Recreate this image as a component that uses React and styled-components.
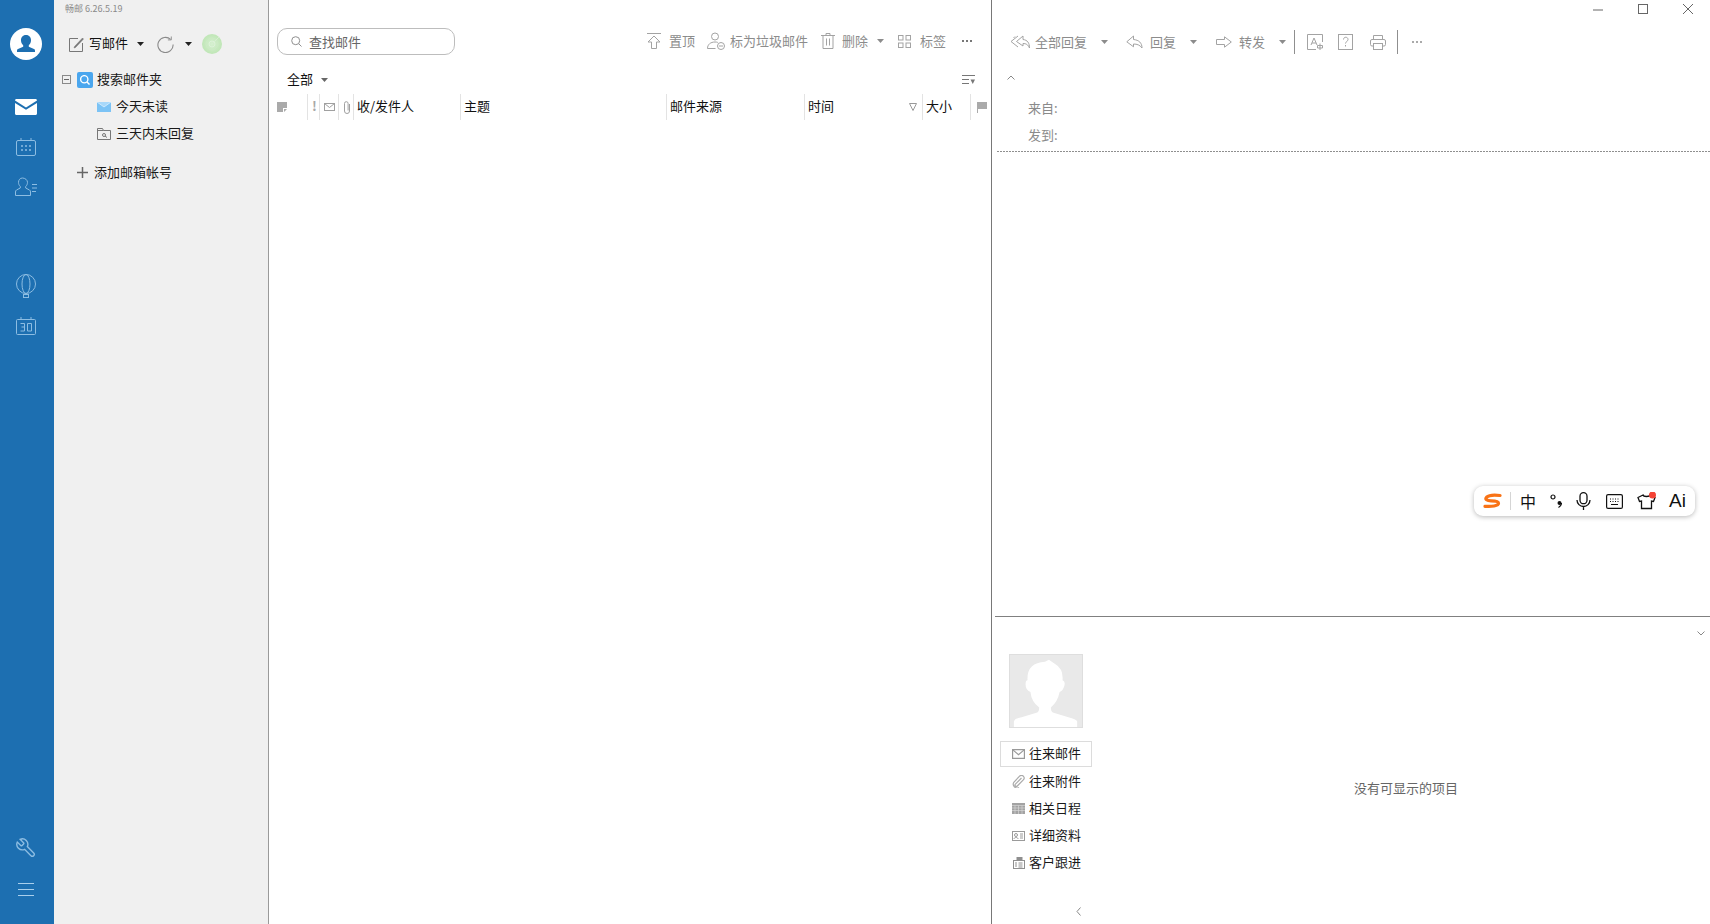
import React from "react"
import styled, { createGlobalStyle } from "styled-components"

const Global = createGlobalStyle`
  html, body { margin: 0; padding: 0; background: #fff; overflow: hidden; }
  * { box-sizing: border-box; }
  body { font-family: "Noto Sans CJK SC", "Noto Sans", sans-serif; font-size: 13px; color: #111; }
`

const Page = styled.div`
  position: relative;
  display: flex;
  width: 1710px;
  height: 924px;
  overflow: hidden;
`

/* left rail */
const Rail = styled.nav`
  width: 54px;
  flex: none;
  background: #1d6fb1;
  display: flex;
  flex-direction: column;
  align-items: center;
  padding: 28px 2px 15px 0;
`
const RailSlot = styled.div`
  width: 52px;
  height: 40px;
  flex: none;
  display: flex;
  align-items: center;
  justify-content: center;
  margin-top: ${p => p.$top || 0}px;
`
const RailSpacer = styled.div`
  flex: 1;
`

/* folder sidebar */
const Sidebar = styled.aside`
  width: 215px;
  flex: none;
  background: #f0f0f0;
  border-right: 1px solid #9a9a9a;
`
const Version = styled.div`
  height: 22px;
  padding: 1px 0 0 11px;
  font-size: 9px;
  line-height: 15px;
  color: #8a8a8a;
`
const ComposeBar = styled.div`
  height: 44px;
  display: flex;
  align-items: center;
  padding-left: 15px;
`
const ComposeLabel = styled.span`
  margin-left: 5px;
  line-height: 18px;
  padding-bottom: 2px;
`
const TreeRow = styled.div`
  height: 27px;
  display: flex;
  align-items: center;
  padding-left: ${p => p.$indent}px;
  gap: ${p => p.$gap}px;
  margin-top: ${p => p.$top || 0}px;
  color: #1a1a1a;
`
const TreeLabel = styled.span`
  line-height: 18px;
  padding-bottom: 2px;
  margin-left: ${p => p.$left || 0}px;
`
const ExpandBox = styled.span`
  width: 9px;
  height: 9px;
  border: 1px solid #8a8a8a;
  display: flex;
  align-items: center;
  justify-content: center;
  &::before {
    content: "";
    width: 5px;
    height: 1px;
    background: #666;
  }
`
const SearchBadge = styled.span`
  width: 16px;
  height: 16px;
  border-radius: 2px;
  background: #4aa6ee;
  display: flex;
  align-items: center;
  justify-content: center;
`

/* message list */
const ListPane = styled.section`
  width: 722px;
  flex: none;
  display: flex;
  flex-direction: column;
`
const ListToolbar = styled.div`
  height: 66px;
  padding: 16px 19px 0 8px;
  display: flex;
  align-items: center;
`
const SearchBox = styled.div`
  width: 178px;
  height: 27px;
  border: 1px solid #bdbdbd;
  border-radius: 10px;
  display: flex;
  align-items: center;
  padding-left: 13px;
  gap: 7px;
  color: #666;
  margin-right: auto;
`
const Action = styled.div`
  display: flex;
  align-items: center;
  gap: ${p => p.$gap}px;
  margin-left: ${p => p.$left || 0}px;
  color: #8c8c8c;
  line-height: 18px;
  white-space: nowrap;
`
const FilterRow = styled.div`
  height: 27px;
  margin-bottom: 1px;
  display: flex;
  align-items: center;
  padding: 0 16px 0 18px;
  justify-content: space-between;
`
const FilterLabel = styled.div`
  display: flex;
  align-items: center;
  gap: 8px;
  line-height: 18px;
`
const FilterText = styled.span`
  padding-bottom: 1px;
`
const ColumnHeader = styled.div`
  height: 26px;
  display: grid;
  grid-template-columns: 38px 12px 19px 15px 107px 206px 138px 118px 48px 21px;
`
const Column = styled.div`
  display: flex;
  align-items: center;
  padding-left: ${p => p.$pad ?? 3}px;
  border-left: ${p => (p.$first ? "none" : "1px solid #e3e3e3")};
  justify-content: ${p => (p.$spread ? "space-between" : "flex-start")};
  padding-right: ${p => (p.$spread ? 5 : 0)}px;
  white-space: nowrap;
`
const HeadLabel = styled.span`
  line-height: 18px;
  padding-bottom: 3px;
`
const Bang = styled.span`
  color: #a8a8a8;
  font-weight: 700;
  font-size: 13px;
  line-height: 18px;
  padding-bottom: 3px;
`

/* reading pane */
const ReadPane = styled.section`
  flex: 1;
  display: flex;
  flex-direction: column;
  border-left: 1px solid #787878;
`
const WindowBar = styled.div`
  height: 20px;
  display: flex;
  justify-content: flex-end;
  align-items: flex-start;
  padding: 4px 17px 0 0;
  gap: 35px;
`
const ReadToolbar = styled.div`
  height: 44px;
  display: flex;
  align-items: center;
  padding-left: 18px;
`
const ToolDivider = styled.span`
  width: 1px;
  height: 24px;
  background: #8f8f8f;
  margin-left: ${p => p.$left}px;
`
const Headers = styled.header`
  height: 88px;
  margin-left: 5px;
  background: repeating-linear-gradient(90deg, #8f8f8f 0 2px, transparent 2px 3px) left bottom / 100% 1px no-repeat;
`
const CollapseRow = styled.div`
  height: 30px;
  display: flex;
  align-items: center;
  padding: 0 0 4px 10px;
`
const Field = styled.div`
  height: 27px;
  display: flex;
  align-items: center;
  padding-left: 31px;
  color: #8a8a8a;
`
const ReadBody = styled.div`
  flex: 1;
`
const ContactPane = styled.div`
  height: 308px;
  margin-left: 3px;
  border-top: 1px solid #808080;
  display: flex;
  position: relative;
`
const CollapseCorner = styled.div`
  position: absolute;
  top: 14px;
  right: 5px;
  display: flex;
`
const ContactNav = styled.div`
  width: 107px;
  flex: none;
  padding: 37px 0 0 5px;
  display: flex;
  flex-direction: column;
`
const AvatarFrame = styled.div`
  width: 74px;
  height: 74px;
  margin: 0 0 13px 9px;
  background: #e9e9e9;
  border: 1px solid #dedede;
  display: flex;
`
const NavItem = styled.div`
  width: 92px;
  height: ${p => (p.$active ? 26 : 27)}px;
  margin-bottom: ${p => (p.$active ? 1 : 0)}px;
  border: ${p => (p.$active ? "1px solid #dcdcdc" : "none")};
  display: flex;
  align-items: center;
  padding-left: ${p => (p.$active ? 11 : 12)}px;
  gap: 4px;
  color: #1a1a1a;
`
const NavGlyph = styled.span`
  width: 13px;
  height: 13px;
  flex: none;
  display: flex;
  align-items: center;
  justify-content: center;
`
const NavLabel = styled.span`
  line-height: 18px;
  padding-bottom: 2px;
`
const NavBack = styled.div`
  margin: 31px 0 0 76px;
  display: flex;
`
const EmptyNote = styled.div`
  flex: 1;
  display: flex;
  align-items: center;
  justify-content: center;
  color: #666;
  padding-top: 34px;
`

/* floating input method bar */
const ImeBar = styled.div`
  position: absolute;
  left: 1474px;
  top: 486px;
  width: 221px;
  height: 30px;
  background: #fff;
  border-radius: 9px;
  box-shadow: 0 1px 5px rgba(0, 0, 0, 0.28);
  display: flex;
  align-items: center;
  padding-left: 9px;
`
const ImeDivider = styled.span`
  width: 1px;
  height: 18px;
  background: #d5d5d5;
  margin: 0 9px 0 8px;
`
const ImeChar = styled.span`
  font-size: ${p => p.$size}px;
  line-height: 20px;
  color: #111;
  margin-left: ${p => p.$left || 0}px;
  font-family: ${p => (p.$latin ? '"Liberation Sans", sans-serif' : "inherit")};
`
const ImeIcon = styled.span`
  display: flex;
  margin-left: ${p => p.$left}px;
`

/* icons */
const Svg = ({ w, h = w, children, fill = "none", stroke = "#8c8c8c", sw = 1 }) => (
  <svg width={w} height={h} viewBox={`0 0 ${w} ${h}`} fill={fill} stroke={stroke} strokeWidth={sw} style={{ flex: "none", display: "block" }}>
    {children}
  </svg>
)
const Caret = ({ color = "#8c8c8c", left = 0 }) => (
  <svg width="7" height="4" viewBox="0 0 7 4" style={{ flex: "none", marginLeft: left }}>
    <path d="M0 0h7L3.5 4z" fill={color} />
  </svg>
)

const railLine = "#8dbde2"

const Avatar = () => (
  <svg width="32" height="32" viewBox="0 0 32 32" style={{ flex: "none" }}>
    <circle cx="16" cy="16" r="16" fill="#fff" />
    <path d="M16 7c-3.400 0-5.200 2.600-5 5.600.1 2 .9 3.600 2.200 4.700v1.400l-5.200 2.200c-.8.400-1 1-1 2v1.100h18v-1.100c0-1-.2-1.600-1-2l-5.200-2.200v-1.400c1.300-1.100 2.100-2.700 2.200-4.700.2-3-1.600-5.600-5-5.600z" fill="#1d6fb1" />
  </svg>
)
const RailMail = () => (
  <svg width="22" height="16" viewBox="0 0 22 16">
    <path d="M0 1.500C0 .6.600 0 1.500 0h19c.9 0 1.500.6 1.500 1.500L11 8.500z" fill="#fff" />
    <path d="M0 4l11 6.800L22 4v10.500c0 .9-.6 1.500-1.500 1.500h-19C.6 16 0 15.400 0 14.500z" fill="#fff" />
  </svg>
)
const RailCalendar = () => (
  <Svg w={20} h={18} stroke={railLine}>
    <rect x="0.500" y="2.500" width="19" height="15" rx="1.500" />
    <path d="M5 0v3M15 0v3" />
    <path d="M5 8h2M9 8h2M13 8h2M5 12h2M9 12h2M13 12h2" strokeWidth="1.500" />
  </Svg>
)
const RailContacts = () => (
  <Svg w={22} h={20} stroke={railLine}>
    <path d="M7.500 1c-2.500 0-4 2-4 4.300 0 1.700.7 3.300 1.800 4.200v1.500L1.500 13c-.7.400-1 1-1 2v3.500h15V15c0-1-.3-1.600-1-2l-3.800-2V9.500c1.100-.9 1.800-2.500 1.800-4.200C12.500 3 10 1 7.500 1z" />
    <path d="M17 7.500h5M17 11h5M17 14.500h4" />
  </Svg>
)
const RailBalloon = () => (
  <Svg w={20} h={24} stroke={railLine}>
    <circle cx="10" cy="10" r="9.500" />
    <ellipse cx="10" cy="10" rx="4" ry="9.500" />
    <rect x="7.500" y="20.500" width="5" height="3" />
  </Svg>
)
const RailThirty = () => (
  <Svg w={20} h={18} stroke={railLine}>
    <rect x="0.500" y="2.500" width="19" height="15" rx="1" />
    <path d="M5 0v3M15 0v3" />
    <path d="M4.500 6.500h4v7.500h-4M5.500 10h3M11.500 6.500h4v7.500h-4z" />
  </Svg>
)
const RailWrench = () => (
  <svg width="22" height="22" viewBox="0 0 24 24" fill="none" stroke={railLine} strokeWidth="1.500">
    <g transform="translate(24 0) scale(-1 1)">
      <path d="M14.700 6.300a1 1 0 0 0 0 1.400l1.600 1.600a1 1 0 0 0 1.400 0l3.770-3.770a6 6 0 0 1-7.940 7.940l-6.910 6.910a2.120 2.120 0 0 1-3-3l6.910-6.910a6 6 0 0 1 7.940-7.940l-3.760 3.760z" />
    </g>
  </svg>
)
const RailMenu = () => (
  <Svg w={16} h={13} stroke="#a9cfec">
    <path d="M0 .5h16M0 6.500h16M0 12.500h16" />
  </Svg>
)

const ComposeIcon = () => (
  <Svg w={15} h={15} stroke="#777">
    <path d="M9 1.500H.5v13h13V6" />
    <path d="M5.500 9.500l8-8.500 1 1-8 8.500-1.500.5z" fill="#777" strokeWidth="0.500" />
  </Svg>
)
const RefreshIcon = () => (
  <Svg w={17} h={17} stroke="#8a8a8a" sw={1.100}>
    <path d="M13.600 3.300A7.600 7.600 0 1 0 16.100 8.500" />
    <path d="M14.300 0.500V3.900H10.900" strokeWidth="0.900" />
  </Svg>
)
const Radar = () => (
  <svg width="20" height="20" viewBox="0 0 20 20" style={{ marginLeft: 10 }}>
    <defs>
      <radialGradient id="radarFill">
        <stop offset="0%" stopColor="#d6f0d0" />
        <stop offset="100%" stopColor="#bfe6b6" />
      </radialGradient>
    </defs>
    <circle cx="10" cy="10" r="10" fill="url(#radarFill)" />
    <circle cx="10" cy="10" r="6" fill="none" stroke="#cdeac6" />
    <circle cx="10" cy="10" r="3" fill="none" stroke="#dcf2d8" />
    <path d="M10 10L17 3" stroke="#d6efd1" />
  </svg>
)
const Glass = ({ size = 11, color = "#8f8f8f", sw = 1 }) => (
  <svg width={size} height={size} viewBox="0 0 11 11" fill="none" stroke={color} strokeWidth={sw} style={{ flex: "none" }}>
    <circle cx="4.700" cy="4.700" r="4" />
    <path d="M7.700 7.700L10.500 10.500" />
  </svg>
)
const TodayIcon = () => (
  <svg width="14" height="10" viewBox="0 0 14 10">
    <rect width="14" height="10" fill="#7cc3f5" />
    <path d="M0 0l7 5 7-5" fill="#a8d8fa" stroke="#e4f3fe" strokeWidth="0.700" />
  </svg>
)
const FolderSearch = () => (
  <Svg w={14} h={12} stroke="#777">
    <path d="M.5 11.500V.5h5l1 2h7v9z" />
    <path d="M.5 2.500h6" />
    <circle cx="7" cy="7" r="1.500" />
    <path d="M8 8l2 1.500" />
  </Svg>
)
const Plus = () => (
  <Svg w={11} h={11} stroke="#666" sw={1.500}>
    <path d="M5.500 0v11M0 5.500h11" />
  </Svg>
)

const PinIcon = () => (
  <Svg w={14} h={16} stroke="#a3a3a3">
    <path d="M0 .5h14M7 3l6 6H9.500v6.500h-5V9H1z" />
  </Svg>
)
const SpamIcon = () => (
  <Svg w={18} h={18} stroke="#a3a3a3">
    <circle cx="8" cy="4.500" r="3.500" />
    <path d="M.5 16.500c0-4 3-6.500 7.500-6.500 1 0 2 .1 2.800.4M.5 16.500h8" />
    <circle cx="14" cy="14" r="3.500" />
    <path d="M12 14h4" />
  </Svg>
)
const TrashIcon = () => (
  <Svg w={14} h={16} stroke="#a3a3a3">
    <path d="M0 2.500h14M5 2.500V.5h4v2M2 2.500v13h10v-13M5.500 5.500v7M8.500 5.500v7" />
  </Svg>
)
const GridIcon = () => (
  <Svg w={13} h={13} stroke="#a3a3a3">
    <rect x=".5" y=".5" width="4.500" height="4.500" />
    <rect x="8" y=".5" width="4.500" height="4.500" />
    <rect x=".5" y="8" width="4.500" height="4.500" />
    <rect x="8" y="8" width="4.500" height="4.500" />
  </Svg>
)
const Dots = ({ color = "#777" }) => (
  <svg width="10" height="2" viewBox="0 0 10 2">
    <path d="M0 0h2v2H0zM4 0h2v2H4zM8 0h2v2H8z" fill={color} />
  </svg>
)
const SortLines = () => (
  <Svg w={13} h={10} stroke="#777">
    <path d="M0 .5h13M0 4.500h7M0 8.500h7" />
    <path d="M8.500 4.500h4.500L10.750 9z" fill="#777" stroke="none" />
  </Svg>
)

const NoteIcon = () => (
  <svg width="10" height="10" viewBox="0 0 10 10">
    <path d="M0 0h10v6H6v4H0zM7 7h3l-3 3z" fill="#aaa" />
  </svg>
)
const EnvelopeSmall = ({ w = 11, h = 8, color = "#a0a0a0" }) => (
  <svg width={w} height={h} viewBox="0 0 11 8" fill="none" stroke={color} preserveAspectRatio="none" style={{ flex: "none" }}>
    <rect x=".5" y=".5" width="10" height="7" />
    <path d="M.5.5l5 4 5-4" />
  </svg>
)
const Clip = () => (
  <svg width="8" height="13" viewBox="0 0 8 13" fill="none" stroke="#a0a0a0" style={{ flex: "none" }}>
    <path d="M6.500 3v7a2.500 2.500 0 0 1-5 0V2.500a1.800 1.800 0 0 1 3.600 0V9.500" />
  </svg>
)
const SortDown = () => (
  <svg width="8" height="8" viewBox="0 0 8 8" fill="none" stroke="#999">
    <path d="M.5.5h7L4 7.500z" />
  </svg>
)
const FlagIcon = () => (
  <svg width="10" height="11" viewBox="0 0 10 11">
    <path d="M0 0h10v7H1v4H0z" fill="#aaa" />
  </svg>
)

const ReplyAll = () => (
  <Svg w={20} h={14} stroke="#a3a3a3">
    <path d="M13 1L6.500 6.500 13 11V8.500c3 0 5 1 6.500 4.500 0-5-2-8-6.500-8.500z" />
    <path d="M8 1L1 6.500 8 12" />
    <path d="M5 1.500L3.500 3" />
  </Svg>
)
const Reply = () => (
  <Svg w={17} h={14} stroke="#a3a3a3">
    <path d="M7.500 1L.8 6.800l6.700 5V9c3.500 0 6.500 1 8.500 4 0-5-3-8-8.500-8.500z" />
  </Svg>
)
const Forward = () => (
  <Svg w={16} h={12} stroke="#a3a3a3">
    <path d="M.5 3.500h8V.8L15.300 6 8.500 11.200V8.500h-8z" />
  </Svg>
)
const Translate = () => (
  <Svg w={16} h={16} stroke="#a3a3a3">
    <path d="M15.500 8V.5H.5v15H9" />
    <path d="M4 11l3-7 3 7M5 9h4" />
    <path d="M10.500 11.500h5v2.500h-5zM13 9.500v6.500" />
  </Svg>
)
const Question = () => (
  <Svg w={15} h={16} stroke="#a3a3a3">
    <rect x=".5" y=".5" width="14" height="15" />
    <path d="M5.500 5.500c0-3 4.500-3 4.500 0 0 2-2.500 2-2.500 4M7.500 11v1.500" />
  </Svg>
)
const Printer = () => (
  <Svg w={16} h={15} stroke="#a3a3a3">
    <path d="M3.500 4.500v-4h9v4" />
    <rect x=".5" y="4.500" width="15" height="6.500" rx="1.500" />
    <rect x="3.500" y="8.500" width="9" height="6" fill="#fff" />
  </Svg>
)

const Silhouette = () => (
  <svg width="72" height="72" viewBox="0 0 74 74" style={{ display: "block" }}>
    <path d="M4 74V68Q5 65 12 64L28 59Q30 58 30 54Q22 48 21 38Q16 36 16 30Q16 26 18 26Q17 8 36 7L40 5L46 9Q55 14 54 26Q57 27 56 31Q55 36 51 38Q49 48 42 54Q42 58 44 59L60 64Q68 66 69 68V74Z" fill="#fff" />
  </svg>
)
const Chevron = ({ d, w = 8, h = 5 }) => (
  <svg width={w} height={h} viewBox={`0 0 ${w} ${h}`} fill="none" stroke="#888" style={{ flex: "none" }}>
    <path d={d} />
  </svg>
)
const NavClip = () => (
  <svg width="13" height="13" viewBox="0 0 13 13" fill="none" stroke="#aaa" strokeWidth="1.200">
    <path d="M9.500 3L3.400 9.100a1.300 1.300 0 0 0 1.900 1.900l6-6.100a2.600 2.600 0 0 0-3.700-3.700L1.800 7.300a3.800 3.800 0 0 0 5.200 5.200" />
  </svg>
)
const NavCalendar = () => (
  <svg width="13" height="11" viewBox="0 0 13 11">
    <path d="M0 0h13v11H0z" fill="#a3a3a3" />
    <path d="M0 2.500h13M0 5h13M0 7.500h13M3 2.500V11M6.500 2.500V11M10 2.500V11" stroke="#ddd" strokeWidth="0.600" />
  </svg>
)
const NavCard = () => (
  <Svg w={13} h={10} stroke="#9a9a9a">
    <rect x=".5" y=".5" width="12" height="9" />
    <circle cx="4" cy="4" r="1.500" />
    <path d="M2 8c0-2 4-2 4 0M8 3h3M8 5h3M8 7h3" />
  </Svg>
)
const NavPhone = () => (
  <Svg w={12} h={12} stroke="#8f8f8f">
    <rect x=".5" y="3.500" width="11" height="8" />
    <rect x="4" y=".5" width="5" height="3" fill="#8f8f8f" />
    <path d="M3 5v5M5.500 6h4M5.500 8h4M5.500 10h4" />
  </Svg>
)

const SogouS = () => (
  <svg width="19" height="16" viewBox="0 0 19 16" fill="none" stroke="#f97316" strokeWidth="3.200" strokeLinecap="round" strokeLinejoin="round">
    <path d="M17 2.500C12 1.800 6 2 3.500 4.300 1.500 6.300 4 7.800 8 7.800c3 0 7.500 0 7.500 2.500 0 2.700-7 3.500-13.500 3" />
  </svg>
)
const ImeDots = () => (
  <svg width="12" height="14" viewBox="0 0 12 14">
    <circle cx="3" cy="3" r="2" fill="none" stroke="#111" strokeWidth="1.200" />
    <circle cx="9.500" cy="9" r="2" fill="#111" />
    <path d="M11.500 9c0 2-1 3.500-3 4.500" stroke="#111" strokeWidth="1.200" fill="none" />
  </svg>
)
const ImeMic = () => (
  <Svg w={15} h={18} stroke="#111" sw={1.300}>
    <rect x="4" y=".7" width="7" height="11" rx="3.500" />
    <path d="M1 8a6.500 6.500 0 0 0 13 0M7.500 14.500V18" />
  </Svg>
)
const ImeKeyboard = () => (
  <Svg w={17} h={15} stroke="#111" sw={1.200}>
    <rect x=".6" y=".6" width="15.800" height="13.800" rx="1.500" />
    <path d="M4 5h1M6.500 5h1M9 5h1M11.500 5h1M4 7.500h1M6.500 7.500h1M9 7.500h1M11.500 7.500h1M5 10.500h7" />
  </Svg>
)
const ImeShirt = () => (
  <svg width="19" height="18" viewBox="0 0 19 18" fill="none" stroke="#111" strokeWidth="1.300">
    <path d="M6 3L1 5.500l1.500 4 2-.5v7.500h10V9l2 .5 1.500-4L13 3c-.5 2-6.500 2-7 0z" />
    <circle cx="15.500" cy="3" r="3.500" fill="#f44336" stroke="none" />
  </svg>
)

export default function App() {
  return (
    <Page>
      <Global />
      <Rail>
        <Avatar />
        <RailSlot $top={27}><RailMail /></RailSlot>
        <RailSlot><RailCalendar /></RailSlot>
        <RailSlot><RailContacts /></RailSlot>
        <RailSlot $top={59}><RailBalloon /></RailSlot>
        <RailSlot><RailThirty /></RailSlot>
        <RailSpacer />
        <RailSlot><RailWrench /></RailSlot>
        <RailSlot $top={1}><RailMenu /></RailSlot>
      </Rail>

      <Sidebar>
        <Version>畅邮 6.26.5.19</Version>
        <ComposeBar>
          <ComposeIcon />
          <ComposeLabel>写邮件</ComposeLabel>
          <Caret color="#222" left={9} />
          <span style={{ width: 13 }} />
          <RefreshIcon />
          <Caret color="#222" left={11} />
          <Radar />
        </ComposeBar>
        <TreeRow $indent={8} $gap={6}>
          <ExpandBox />
          <SearchBadge><Glass size={10} color="#fff" sw={1.500} /></SearchBadge>
          <TreeLabel $left={-2}>搜索邮件夹</TreeLabel>
        </TreeRow>
        <TreeRow $indent={43} $gap={5}><TodayIcon /><TreeLabel>今天未读</TreeLabel></TreeRow>
        <TreeRow $indent={43} $gap={5}><FolderSearch /><TreeLabel>三天内未回复</TreeLabel></TreeRow>
        <TreeRow $indent={23} $gap={6} $top={12}><Plus /><TreeLabel>添加邮箱帐号</TreeLabel></TreeRow>
      </Sidebar>

      <ListPane>
        <ListToolbar>
          <SearchBox><Glass />查找邮件</SearchBox>
          <Action $gap={8}><PinIcon />置顶</Action>
          <Action $gap={5} $left={12}><SpamIcon />标为垃圾邮件</Action>
          <Action $gap={7} $left={13}><TrashIcon />删除</Action>
          <Caret left={9} />
          <Action $gap={9} $left={14}><GridIcon />标签</Action>
          <Action $gap={0} $left={16}><Dots /></Action>
        </ListToolbar>
        <FilterRow>
          <FilterLabel><FilterText>全部</FilterText><Caret color="#666" /></FilterLabel>
          <SortLines />
        </FilterRow>
        <ColumnHeader>
          <Column $first $pad={8}><NoteIcon /></Column>
          <Column $pad={4}><Bang>!</Bang></Column>
          <Column $pad={4}><EnvelopeSmall /></Column>
          <Column $pad={4}><Clip /></Column>
          <Column><HeadLabel>收/发件人</HeadLabel></Column>
          <Column><HeadLabel>主题</HeadLabel></Column>
          <Column><HeadLabel>邮件来源</HeadLabel></Column>
          <Column $spread><HeadLabel>时间</HeadLabel><SortDown /></Column>
          <Column><HeadLabel>大小</HeadLabel></Column>
          <Column $pad={6}><FlagIcon /></Column>
        </ColumnHeader>
      </ListPane>

      <ReadPane>
        <WindowBar>
          <svg width="10" height="10" viewBox="0 0 10 10"><path d="M0 6h10" stroke="#666" /></svg>
          <svg width="10" height="10" viewBox="0 0 10 10" fill="none"><rect x=".5" y=".5" width="9" height="9" stroke="#666" /></svg>
          <svg width="10" height="10" viewBox="0 0 10 10"><path d="M0 0l10 10M10 0L0 10" stroke="#666" /></svg>
        </WindowBar>
        <ReadToolbar>
          <Action $gap={5}><ReplyAll />全部回复</Action>
          <Caret left={14} />
          <Action $gap={7} $left={18}><Reply />回复</Action>
          <Caret left={14} />
          <Action $gap={7} $left={19}><Forward />转发</Action>
          <Caret left={14} />
          <ToolDivider $left={8} />
          <Action $gap={0} $left={12}><Translate /></Action>
          <Action $gap={0} $left={15}><Question /></Action>
          <Action $gap={0} $left={17}><Printer /></Action>
          <ToolDivider $left={11} />
          <Action $gap={0} $left={14}><Dots color="#aaa" /></Action>
        </ReadToolbar>
        <Headers>
          <CollapseRow><Chevron d="M.5 4.500L4 1l3.500 3.500" /></CollapseRow>
          <Field>来自:</Field>
          <Field>发到:</Field>
        </Headers>
        <ReadBody />
        <ContactPane>
          <CollapseCorner><Chevron d="M.5.5L4 4 7.500.5" /></CollapseCorner>
          <ContactNav>
            <AvatarFrame><Silhouette /></AvatarFrame>
            <NavItem $active><NavGlyph><EnvelopeSmall w={13} h={10} color="#999" /></NavGlyph><NavLabel>往来邮件</NavLabel></NavItem>
            <NavItem><NavGlyph><NavClip /></NavGlyph><NavLabel>往来附件</NavLabel></NavItem>
            <NavItem><NavGlyph><NavCalendar /></NavGlyph><NavLabel>相关日程</NavLabel></NavItem>
            <NavItem><NavGlyph><NavCard /></NavGlyph><NavLabel>详细资料</NavLabel></NavItem>
            <NavItem><NavGlyph><NavPhone /></NavGlyph><NavLabel>客户跟进</NavLabel></NavItem>
            <NavBack><Chevron d="M4.500.5L1 4.500l3.500 4" w={6} h={9} /></NavBack>
          </ContactNav>
          <EmptyNote>没有可显示的项目</EmptyNote>
        </ContactPane>
      </ReadPane>

      <ImeBar>
        <SogouS />
        <ImeDivider />
        <ImeChar $size={16}>中</ImeChar>
        <ImeIcon $left={14}><ImeDots /></ImeIcon>
        <ImeIcon $left={14}><ImeMic /></ImeIcon>
        <ImeIcon $left={15}><ImeKeyboard /></ImeIcon>
        <ImeIcon $left={14}><ImeShirt /></ImeIcon>
        <ImeChar $size={19} $left={13} $latin>Ai</ImeChar>
      </ImeBar>
    </Page>
  )
}
